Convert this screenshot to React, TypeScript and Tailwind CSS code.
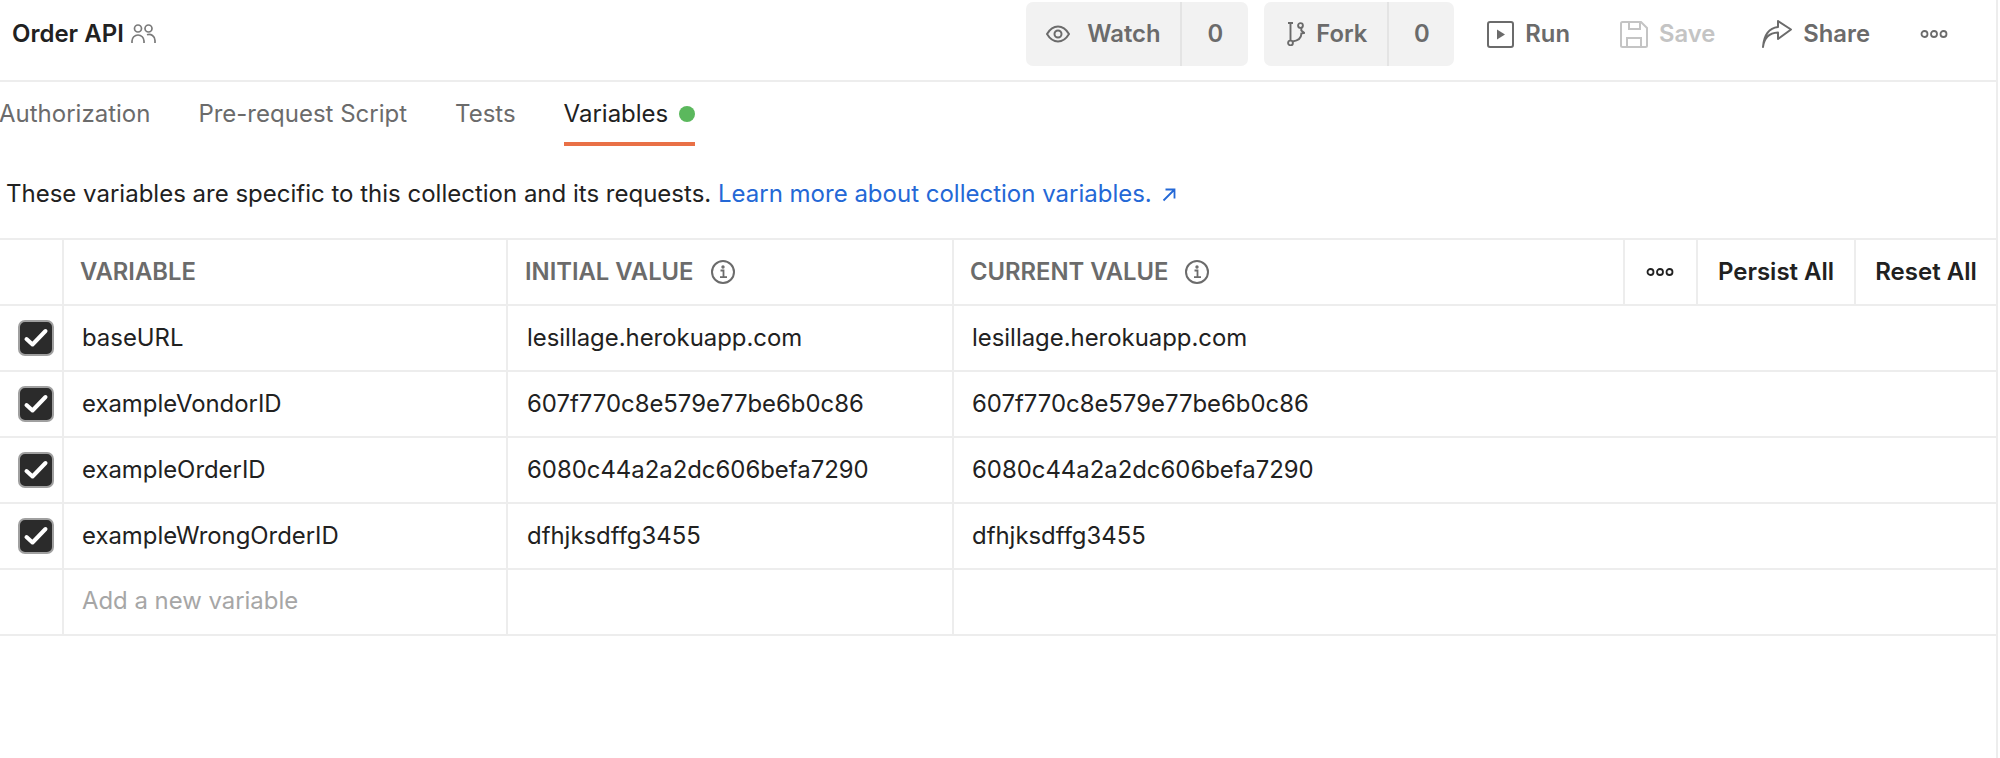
import type { ReactNode } from 'react';

const rows = [
  { name: 'baseURL', initial: 'lesillage.herokuapp.com', current: 'lesillage.herokuapp.com' },
  { name: 'exampleVondorID', initial: '607f770c8e579e77be6b0c86', current: '607f770c8e579e77be6b0c86' },
  { name: 'exampleOrderID', initial: '6080c44a2a2dc606befa7290', current: '6080c44a2a2dc606befa7290' },
  { name: 'exampleWrongOrderID', initial: 'dfhjksdffg3455', current: 'dfhjksdffg3455' },
];

const gridClass = 'grid grid-cols-[64px_444px_446px_1fr] h-[66px] border-b-2 border-[#ededed]';
const cellClass = 'flex items-center border-r-2 border-[#ededed]';

function Dots({ color = '#6b6b6b' }: { color?: string }) {
  return (
    <svg width="28" height="10" viewBox="0 0 28 10" fill="none" stroke={color} strokeWidth="1.8">
      <circle cx="4.5" cy="5" r="3" />
      <circle cx="14" cy="5" r="3" />
      <circle cx="23.5" cy="5" r="3" />
    </svg>
  );
}

function InfoIcon() {
  return (
    <svg width="24" height="24" viewBox="0 0 24 24" fill="none" stroke="#6b6b6b" strokeWidth="2">
      <circle cx="12" cy="12" r="11" />
      <path d="M9.500 10.500H12.500V17M9 17.200H16" strokeWidth="1.800" />
      <circle cx="12" cy="7" r="0.700" fill="#6b6b6b" />
    </svg>
  );
}

function Checkbox() {
  return (
    <span className="flex h-[36px] w-[36px] items-center justify-center rounded-[7px] border-2 border-[#a0a0a0] bg-[#2b2b2b]">
      <svg width="26" height="20" viewBox="0 0 26 20" fill="none" stroke="#ffffff" strokeWidth="4" strokeLinecap="round" strokeLinejoin="round">
        <path d="M3.500 11l6 5.500L22.500 3" />
      </svg>
    </span>
  );
}

function Counter({ icon, label, width, labelClass }: { icon: ReactNode; label: string; width: string; labelClass: string }) {
  return (
    <div className={`flex h-[64px] items-stretch rounded-[7px] bg-[#f2f2f2] text-[#6b6b6b] font-semibold ${width}`}>
      <div className={`flex items-center border-r-2 border-[#e4e4e4] ${labelClass}`}>
        {icon}
        <span>{label}</span>
      </div>
      <div className="flex flex-1 items-center justify-center">0</div>
    </div>
  );
}

export default function App() {
  return (
    <div className="mr-[2px] h-[758px] overflow-hidden border-r-2 border-[#ededed] bg-white text-[#212121] text-[24px] [font-family:Inter,sans-serif]">
      <header className="flex h-[82px] items-start justify-between border-b-2 border-[#ededed] pt-[2px] pl-[12px]">
        <div className="flex h-[64px] items-center gap-[7px] font-semibold">
          <span>Order API</span>
          <svg width="25" height="20" viewBox="0 0 25 20" fill="none" stroke="#7a7a7a" strokeWidth="1.700">
            <circle cx="7" cy="4.500" r="3.500" />
            <circle cx="17.500" cy="4.500" r="3.500" />
            <path d="M1 19v-2a6 6 0 0 1 12 0v2" />
            <path d="M16 10.700a6 6 0 0 1 8 5.700v2.600" />
          </svg>
        </div>
        <div className="flex h-[64px] items-center text-[23.8px]">
          <div className="flex gap-[16px]">
            <Counter
              label="Watch"
              width="w-[222px]"
              labelClass="w-[156px] gap-[17px] pl-[20px]"
              icon={
                <svg width="24" height="18" viewBox="0 0 24 18" fill="none" stroke="#6b6b6b" strokeWidth="2">
                  <path d="M1 9C4 4 8 1.500 12 1.500S20 4 23 9c-3 5-7 7.500-11 7.500S4 14 1 9z" />
                  <circle cx="12" cy="9" r="3.500" />
                </svg>
              }
            />
            <Counter
              label="Fork"
              width="w-[190px]"
              labelClass="w-[125px] gap-[11px] pl-[23px]"
              icon={
                <svg width="18" height="24" viewBox="0 0 18 24" fill="none" stroke="#6b6b6b" strokeWidth="1.900">
                  <circle cx="13.500" cy="3.500" r="2.400" />
                  <circle cx="3.500" cy="21" r="2.400" />
                  <path d="M3.500 1v17.500M1 1h5M5.500 19.500c6-1 9-4 8.800-8l3-.5-3-2.500v-2.500" />
                </svg>
              }
            />
          </div>
          <div className="ml-[33px] flex items-center gap-[11px] font-semibold text-[#6b6b6b]">
            <svg width="27" height="27" viewBox="0 0 27 27" fill="none" stroke="#6b6b6b" strokeWidth="2">
              <rect x="1" y="1" width="25" height="25" rx="2" />
              <path d="M10 8.500l8 5-8 5z" fill="#6b6b6b" stroke="none" />
            </svg>
            <span>Run</span>
          </div>
          <div className="ml-[50px] flex items-center gap-[11px] font-semibold text-[#c4c4c4]">
            <svg width="28" height="27" viewBox="0 0 28 27" fill="none" stroke="#c4c4c4" strokeWidth="2">
              <path d="M2.500 1H21l6 6v17.500a1.500 1.500 0 0 1-1.500 1.500h-23A1.500 1.500 0 0 1 1 24.500v-22A1.500 1.500 0 0 1 2.500 1z" />
              <path d="M9 1v7h11V1M7 26V17h14v9" />
            </svg>
            <span>Save</span>
          </div>
          <div className="ml-[47px] flex items-center gap-[11px] font-semibold text-[#6b6b6b]">
            <svg width="30" height="28" viewBox="0 0 30 28" fill="none" stroke="#6b6b6b" strokeWidth="2" strokeLinejoin="round">
              <path d="M1 27c1-9 6-14 15-14.500V19l13-9.500L16 1v6C7 8 2 15 1 27z" />
            </svg>
            <span>Share</span>
          </div>
          <div className="ml-[50px] mr-[48px] flex items-center">
            <Dots />
          </div>
        </div>
      </header>

      <nav className="flex h-[64px] items-stretch gap-[48px] -ml-[1px] text-[#6b6b6b]">
        <span className="flex items-center">Authorization</span>
        <span className="flex items-center">Pre-request Script</span>
        <span className="flex items-center">Tests</span>
        <span className="flex items-center gap-[11px] border-y-4 border-t-transparent border-b-[#e97046] text-[#212121]">
          Variables
          <span className="h-[16px] w-[16px] rounded-full bg-[#5bb85d]" />
        </span>
      </nav>

      <p className="mt-[33px] h-[59px] pl-[6px] leading-[30px]">
        These variables are specific to this collection and its requests.{' '}
        <span className="text-[#2468d6]">
          Learn more about collection variables.
          <svg className="ml-[10px] inline-block align-baseline" width="14" height="14" viewBox="0 0 14 14" fill="none" stroke="#2468d6" strokeWidth="1.800">
            <path d="M1.500 12.500L12 2M3.500 1.500H12.500V10.500" />
          </svg>
        </span>
      </p>

      <section className="border-t-2 border-[#ededed] text-[23.9px]">
        <div className={gridClass}>
          <div className={cellClass} />
          <div className={`${cellClass} pl-[16px] font-semibold text-[#6b6b6b] text-[23.8px]`}>VARIABLE</div>
          <div className={`${cellClass} gap-[17px] pl-[17px] font-semibold text-[#6b6b6b] text-[23.8px]`}>
            INITIAL VALUE
            <InfoIcon />
          </div>
          <div className="flex items-center">
            <div className="flex flex-1 items-center gap-[16px] pl-[16px] font-semibold text-[#6b6b6b] text-[23.8px]">
              CURRENT VALUE
              <InfoIcon />
            </div>
            <div className="flex h-full w-[75px] items-center justify-center border-x-2 border-[#ededed] pr-[2px]">
              <Dots color="#212121" />
            </div>
            <div className="flex h-full w-[158px] items-center justify-center border-r-2 border-[#ededed] font-semibold text-[24px]">
              Persist All
            </div>
            <div className="flex h-full w-[140px] items-center justify-center font-semibold text-[24px]">Reset All</div>
          </div>
        </div>

        {rows.map((row) => (
          <div key={row.name} className={gridClass}>
            <div className={`${cellClass} pl-[18px]`}>
              <Checkbox />
            </div>
            <div className={`${cellClass} pl-[18px]`}>{row.name}</div>
            <div className={`${cellClass} pl-[19px]`}>{row.initial}</div>
            <div className="flex items-center pl-[18px]">{row.current}</div>
          </div>
        ))}

        <div className={gridClass}>
          <div className={cellClass} />
          <div className={`${cellClass} pb-[2px] pl-[18px] text-[#a6a6a6]`}>Add a new variable</div>
          <div className={cellClass} />
          <div />
        </div>
      </section>
    </div>
  );
}
